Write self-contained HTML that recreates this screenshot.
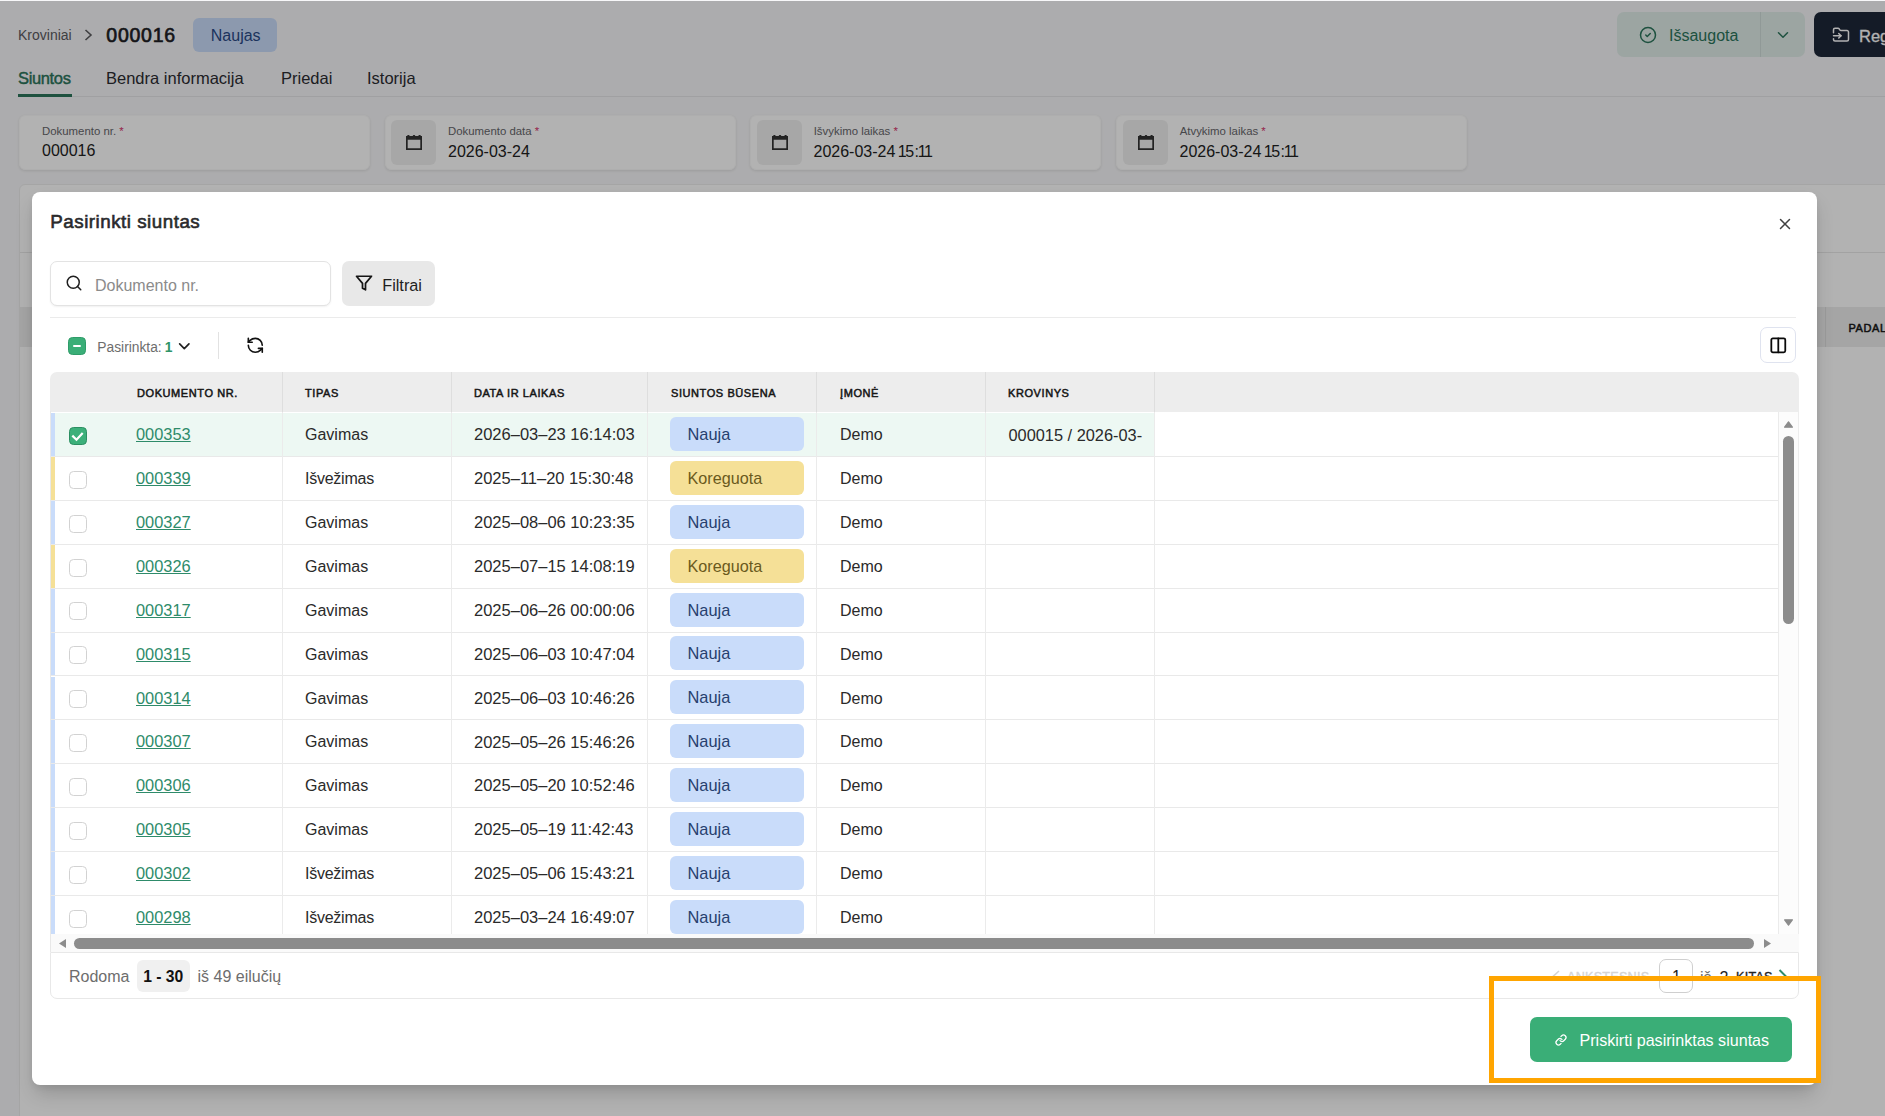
<!DOCTYPE html>
<html lang="lt">
<head>
<meta charset="utf-8">
<title>Kroviniai 000016</title>
<style>
*{box-sizing:border-box;margin:0;padding:0}
html,body{width:1885px;height:1116px;overflow:hidden}
body{font-family:"Liberation Sans",sans-serif;background:#f7f7f9;color:#222;position:relative}
.abs{position:absolute}
.t{position:absolute;white-space:nowrap;line-height:1}
svg{display:block;position:absolute;overflow:visible}

/* ---------- background page ---------- */
#page{position:absolute;left:0;top:0;width:1885px;height:1116px;overflow:hidden}
.crumb{left:18px;top:28px;font-size:14px;color:#5b5b5f}
.docno{left:106.3px;top:25.9px;font-size:19.5px;font-weight:400;color:#1d1d24;letter-spacing:.75px;-webkit-text-stroke:.65px #1d1d24}
.badge-naujas{left:193px;top:18px;width:84px;height:34px;border-radius:6px;background:#c9dcfa}
.badge-naujas span{left:17.8px;top:9.8px;font-size:16px;color:#2a4a86}
.tab{top:70px;font-size:16.5px;color:#2b2b31}
.tab.active{color:#2b755b;font-weight:400;font-size:16.5px;-webkit-text-stroke:.45px #2b755b;letter-spacing:-.35px}
.tabline{left:18px;top:96px;width:1867px;height:1px;background:#e6e6e8}
.tabunder{left:18px;top:94px;width:54px;height:3px;background:#2b755b}
.field{top:115px;height:55px;width:351px;background:#fff;border:1px solid #fafafa;border-radius:6px;box-shadow:0 1px 3px rgba(0,0,0,.10)}
.field .lbl{font-size:11.4px;color:#66666b;top:10px}
.field .lbl i{color:#d6336c;font-style:normal}
.field .val{font-size:16px;color:#222;top:27px}
.field .ico{left:5px;top:4px;width:45px;height:45px;border-radius:6px;background:#f0f0f0}
.card2{left:19px;top:184px;width:1900px;height:960px;background:#fff;border:1px solid #ededed;border-radius:6px}
.card2 .ln{left:0;top:67px;width:1900px;height:1px;background:#e9e9e9}
.card2 .hd{left:0;top:122px;width:1900px;height:40px;background:#ededed}
.btn-saved{left:1617px;top:12px;width:188px;height:45px;border-radius:7px;background:#e0ece9}
.btn-saved .dv{left:143px;top:0;width:1px;height:45px;background:#cfdcd8}
.btn-saved .tx{left:52px;top:15.9px;font-size:16px;color:#2b755b}
.btn-reg{left:1814px;top:12px;width:120px;height:45px;border-radius:7px;background:#1e2738}
.btn-reg .tx{left:45px;top:15.6px;font-size:16.5px;color:#fff;-webkit-text-stroke:.3px #fff}
#overlay{position:absolute;left:0;top:1px;width:1885px;height:1115px;background:rgba(0,0,0,.30)}

/* ---------- modal ---------- */
#modal{position:absolute;left:32px;top:192px;width:1785px;height:893px;background:#fff;border-radius:8px;box-shadow:0 11px 20px -3px rgba(0,0,0,.18),0 3px 7px -1px rgba(0,0,0,.07)}

/* modal content (page coordinates via #mc) */
#mc{position:absolute;left:0;top:0;width:1885px;height:1116px}
.mtitle{left:50.3px;top:212.6px;font-size:18.8px;font-weight:400;letter-spacing:.5px;-webkit-text-stroke:.6px #2a2a2c;color:#2a2a2c}
.search{left:50px;top:261px;width:281px;height:45px;border:1px solid #e3e3e3;border-radius:7px;background:#fff;box-shadow:0 1px 2px rgba(0,0,0,.06)}
.search .ph{left:44px;top:15.8px;font-size:16px;color:#8b8b8b}
.filt{left:342px;top:261px;width:93px;height:45px;border-radius:7px;background:#e8e8e8}
.filt .tx{left:40.2px;top:16.4px;font-size:16.3px;color:#1f1f1f}
.sep{left:50px;top:317px;width:1746px;height:1px;background:#ebebeb}
.cbi{left:68px;top:337px;width:18px;height:18px;border-radius:4.5px;background:#3aae77;border:1px solid #2f9c69}
.cbi i{position:absolute;left:4.2px;top:6.7px;width:7.5px;height:2.6px;background:#fff;border-radius:1px}
.selt{left:97.3px;top:340.6px;font-size:13.8px;color:#6d6d6d}
.selt b{color:#2e9467;font-weight:700;margin-left:3px}
.vdiv{left:218px;top:332px;width:1px;height:27px;background:#e2e2e2}
.colbtn{left:1760px;top:327px;width:36px;height:36px;border:1px solid #dfe3ef;border-radius:7px;background:#fff}
.thead{left:50px;top:372px;width:1749px;height:39.5px;background:#ededed;border-radius:7px 7px 0 0}
.thead .h{top:16px;font-size:11px;font-weight:400;letter-spacing:.58px;color:#161616;-webkit-text-stroke:.5px #161616}
.thead .v{top:0;width:1px;height:39.5px;background:#dedede}
#tb{position:absolute;left:50px;top:412px;width:1728px;height:522px;overflow:hidden;background:#fff}
.row{position:absolute;left:0;width:1728px;height:43.9px;background:#fff}
.row .hl{left:1px;right:0;bottom:0;height:1px;background:#e9e9e9}
.row.sel::before{content:"";position:absolute;left:0;top:0;width:1104px;bottom:0;background:#edf8f3}
.row .bar{left:1px;top:0;bottom:0;width:4px;background:#c9dcfa}
.row.y .bar{background:#f5e097}
.row .cb{left:19px;top:13.8px;width:18px;height:18px;border:1.5px solid #d2d2d2;border-radius:4.5px;background:#fff}
.row .cb.on{border:1px solid #2c8f62;background:#3cb07a}
.row .c{top:14px;font-size:16px;color:#2a2a2a}
.row .c.d{font-size:16.5px;top:13.2px}
.row .lk{top:13.1px;font-size:16.4px;color:#2e8b6a;text-decoration:underline;text-underline-offset:1.3px;text-decoration-thickness:1.2px}
.row .bd{left:620px;top:3.9px;width:134px;height:34px;border-radius:6px;background:#c9dcfa}
.row .bd span{left:17.5px;top:9px;font-size:16.4px;color:#27406e}
.row .bd.y{background:#f5e097}
.row .bd.y span{color:#6a5a1d;font-size:16.2px}
.vl{position:absolute;top:0;width:1px;height:522px;background:#ebebeb}
.vsb{left:1778px;top:412px;width:21px;height:522px;background:#fcfcfc;border-left:1px solid #ebebeb;border-right:1px solid #ededed}
.vsb .th{left:4px;top:24px;width:11px;height:188px;border-radius:5.5px;background:#8c8c8c}
.hsb{left:51px;top:934px;width:1748px;height:18px;background:#fafafa}
.hsb .th{left:23px;top:4px;width:1680px;height:11px;border-radius:5.5px;background:#8c8c8c}
.foot{left:50px;top:952px;width:1749px;height:47px;border:1px solid #e8e8e8;border-radius:0 0 7px 7px;background:#fff}
.foot .g{top:15.8px;font-size:16px;color:#6d6d6d}
.chip{left:86.2px;top:7px;width:53px;height:32px;border-radius:6px;background:#f0f0f0}
.chip span{left:6px;top:9.3px;font-size:15.7px;font-weight:700;color:#111}
.pgclip{position:absolute;left:1540px;top:952px;width:260px;height:24px;overflow:hidden}
.pgclip .p{top:18.6px;font-size:12.6px;font-weight:400;letter-spacing:.25px;-webkit-text-stroke:.35px currentColor}
.pgbox{left:1659px;top:959px;width:34px;height:34px;border:1px solid #cfcfcf;border-radius:7px}
.gbtn{left:1530px;top:1017px;width:262px;height:45px;border-radius:7px;background:#3aae77}
.gbtn .tx{left:49.5px;top:14.5px;font-size:16.1px;color:#fff}
.obox{left:1489px;top:976px;width:332px;height:107px;border:5px solid #ffa500}
</style>
</head>
<body>
<div id="page">
  <div class="t crumb">Kroviniai</div>
  <svg style="left:84px;top:29px" width="9" height="12" viewBox="0 0 9 12"><path d="M1.5 1 L7 6 L1.5 11" fill="none" stroke="#5b5b5f" stroke-width="1.6"/></svg>
  <div class="t docno">000016</div>
  <div class="abs badge-naujas"><span class="t">Naujas</span></div>

  <div class="t tab active" style="left:18px">Siuntos</div>
  <div class="t tab" style="left:106px">Bendra informacija</div>
  <div class="t tab" style="left:281px">Priedai</div>
  <div class="t tab" style="left:367px">Istorija</div>
  <div class="abs tabline"></div>
  <div class="abs tabunder"></div>

  <div class="abs field" style="left:19px"><div class="t lbl" style="left:22px">Dokumento nr. <i>*</i></div><div class="t val" style="left:22px">000016</div></div>
  <div class="abs field" style="left:385px"><div class="abs ico"><svg style="left:15px;top:15px" width="16" height="15" viewBox="0 0 16 15"><path d="M0 .9 H16 V15 H0 Z M1.7 4.8 V13.3 H14.3 V4.8 Z" fill="#333" fill-rule="evenodd"/><rect x="1.2" y="0" width="2.4" height="1.6" rx=".8" fill="#333"/><rect x="6.8" y="0" width="2.4" height="1.6" rx=".8" fill="#333"/><rect x="12.4" y="0" width="2.4" height="1.6" rx=".8" fill="#333"/></svg></div><div class="t lbl" style="left:62px">Dokumento data <i>*</i></div><div class="t val" style="left:62px;top:28px">2026-03-24</div></div>
  <div class="abs field" style="left:750px"><div class="abs ico" style="left:6px"><svg style="left:15px;top:15px" width="16" height="15" viewBox="0 0 16 15"><path d="M0 .9 H16 V15 H0 Z M1.7 4.8 V13.3 H14.3 V4.8 Z" fill="#333" fill-rule="evenodd"/><rect x="1.2" y="0" width="2.4" height="1.6" rx=".8" fill="#333"/><rect x="6.8" y="0" width="2.4" height="1.6" rx=".8" fill="#333"/><rect x="12.4" y="0" width="2.4" height="1.6" rx=".8" fill="#333"/></svg></div><div class="t lbl" style="left:62.7px">Išvykimo laikas <i>*</i></div><div class="t val" style="left:62.5px;top:28px">2026-03-24 <span style="margin-left:-1.95px;letter-spacing:-1.54px">1</span><span style="letter-spacing:.3px">5</span><span style="letter-spacing:-1.1px">:</span><span style="letter-spacing:-2.7px">1</span>1</div></div>
  <div class="abs field" style="left:1116px"><div class="abs ico" style="left:6px"><svg style="left:15px;top:15px" width="16" height="15" viewBox="0 0 16 15"><path d="M0 .9 H16 V15 H0 Z M1.7 4.8 V13.3 H14.3 V4.8 Z" fill="#333" fill-rule="evenodd"/><rect x="1.2" y="0" width="2.4" height="1.6" rx=".8" fill="#333"/><rect x="6.8" y="0" width="2.4" height="1.6" rx=".8" fill="#333"/><rect x="12.4" y="0" width="2.4" height="1.6" rx=".8" fill="#333"/></svg></div><div class="t lbl" style="left:62.7px">Atvykimo laikas <i>*</i></div><div class="t val" style="left:62.5px;top:28px">2026-03-24 <span style="margin-left:-1.95px;letter-spacing:-1.54px">1</span><span style="letter-spacing:.3px">5</span><span style="letter-spacing:-1.1px">:</span><span style="letter-spacing:-2.7px">1</span>1</div></div>

  <div class="abs card2"><div class="abs ln"></div><div class="abs hd"><div class="abs" style="left:1804.5px;top:0;width:1px;height:40px;background:#dedede"></div><div class="t" style="left:1828.5px;top:16px;font-size:11px;font-weight:400;letter-spacing:.58px;color:#161616;-webkit-text-stroke:.5px #161616">PADALINYS</div></div></div>

  <div class="abs btn-saved"><div class="abs dv"></div><svg style="left:22px;top:14px" width="18" height="18" viewBox="0 0 24 24" fill="none" stroke="#2b755b" stroke-width="2" stroke-linecap="round" stroke-linejoin="round"><circle cx="12" cy="12" r="10"/><path d="m9 12 2 2 4-4"/></svg><div class="t tx">Išsaugota</div><svg style="left:157px;top:13.5px" width="18" height="18" viewBox="0 0 24 24" fill="none" stroke="#2b755b" stroke-width="2" stroke-linecap="round" stroke-linejoin="round"><path d="m6 9 6 6 6-6"/></svg></div>
  <div class="abs btn-reg"><svg style="left:18px;top:14px" width="18" height="18" viewBox="0 0 24 24" fill="none" stroke="#fff" stroke-width="2" stroke-linecap="round" stroke-linejoin="round"><path d="M2 9V5a2 2 0 0 1 2-2h3.9a2 2 0 0 1 1.69.9l.81 1.2a2 2 0 0 0 1.67.9H20a2 2 0 0 1 2 2v10a2 2 0 0 1-2 2H4a2 2 0 0 1-2-2v-1"/><path d="M2 13h10"/><path d="m9 16 3-3-3-3"/></svg><div class="t tx">Reg</div></div>
</div>
<div id="overlay"></div>

<div id="modal"></div>

<div id="mc">
  <div class="t mtitle">Pasirinkti siuntas</div>
  <svg style="left:1776px;top:215px" width="18" height="18" viewBox="0 0 24 24" fill="none" stroke="#414141" stroke-width="2" stroke-linecap="round" stroke-linejoin="round"><path d="M18 6 6 18"/><path d="m6 6 12 12"/></svg>

  <div class="abs search">
    <svg style="left:14.1px;top:11.8px" width="18" height="18" viewBox="0 0 24 24" fill="none" stroke="#1f1f1f" stroke-width="2" stroke-linecap="round" stroke-linejoin="round"><circle cx="11" cy="11" r="8"/><path d="m21 21-4.3-4.3"/></svg>
    <div class="t ph">Dokumento nr.</div>
  </div>
  <div class="abs filt">
    <svg style="left:13px;top:13.1px" width="18" height="18" viewBox="0 0 24 24" fill="none" stroke="#141414" stroke-width="2.3" stroke-linecap="round" stroke-linejoin="round"><polygon points="22 3 2 3 10 12.46 10 19 14 21 14 12.46 22 3"/></svg>
    <div class="t tx">Filtrai</div>
  </div>
  <div class="abs sep"></div>

  <div class="abs cbi"><i></i></div>
  <div class="t selt">Pasirinkta:<b>1</b></div>
  <svg style="left:175.3px;top:337px" width="18.6" height="18.6" viewBox="0 0 24 24" fill="none" stroke="#222" stroke-width="2.2" stroke-linecap="round" stroke-linejoin="round"><path d="m6 9 6 6 6-6"/></svg>
  <div class="abs vdiv"></div>
  <svg style="left:245.85px;top:335.9px" width="18.6" height="18.6" viewBox="0 0 24 24" fill="none" stroke="#111" stroke-width="2.1" stroke-linecap="round" stroke-linejoin="round"><path d="M21 12a9 9 0 0 0-9-9 9.75 9.75 0 0 0-6.74 2.74L3 8"/><path d="M3 3v5h5"/><path d="M3 12a9 9 0 0 0 9 9 9.75 9.75 0 0 0 6.74-2.74L21 16"/><path d="M16 16h5v5"/></svg>
  <div class="abs colbtn"><svg style="left:8px;top:7.6px" width="18.6" height="18.6" viewBox="0 0 24 24" fill="none" stroke="#0a0a0a" stroke-width="2.3" stroke-linecap="round" stroke-linejoin="round"><rect width="18" height="18" x="3" y="3" rx="2"/><path d="M12 3v18"/></svg></div>

  <div class="abs thead">
    <div class="t h" style="left:87px">DOKUMENTO NR.</div>
    <div class="t h" style="left:255px">TIPAS</div>
    <div class="t h" style="left:424px">DATA IR LAIKAS</div>
    <div class="t h" style="left:621px">SIUNTOS BŪSENA</div>
    <div class="t h" style="left:790px">ĮMONĖ</div>
    <div class="t h" style="left:958px">KROVINYS</div>
    <div class="abs v" style="left:232px"></div><div class="abs v" style="left:401px"></div><div class="abs v" style="left:597px"></div><div class="abs v" style="left:766px"></div><div class="abs v" style="left:935px"></div><div class="abs v" style="left:1104px"></div>
  </div>

  <div id="tb">
<div class="row sel" style="top:1.1px"><div class="abs bar"></div><div class="abs cb on"><svg style="left:-1px;top:-1px" width="18" height="18" viewBox="0 0 18 18"><path d="M3.3 8.6 L7.5 12.7 L13.7 6.1" fill="none" stroke="#fff" stroke-width="2.2"/></svg></div><a class="t lk" style="left:86px">000353</a><div class="t c" style="left:255px">Gavimas</div><div class="t c d" style="left:424px">2026–03–23 16:14:03</div><div class="abs bd"><span class="t">Nauja</span></div><div class="t c" style="left:790px">Demo</div><div class="t c" style="left:958.5px;font-size:16.35px;top:13.5px">000015 / 2026-03-</div><div class="abs hl"></div></div>
<div class="row y" style="top:45.0px"><div class="abs bar"></div><div class="abs cb"></div><a class="t lk" style="left:86px">000339</a><div class="t c" style="left:255px;letter-spacing:-.25px">Išvežimas</div><div class="t c d" style="left:424px">2025–11–20 15:30:48</div><div class="abs bd y"><span class="t">Koreguota</span></div><div class="t c" style="left:790px">Demo</div><div class="abs hl"></div></div>
<div class="row" style="top:88.9px"><div class="abs bar"></div><div class="abs cb"></div><a class="t lk" style="left:86px">000327</a><div class="t c" style="left:255px">Gavimas</div><div class="t c d" style="left:424px">2025–08–06 10:23:35</div><div class="abs bd"><span class="t">Nauja</span></div><div class="t c" style="left:790px">Demo</div><div class="abs hl"></div></div>
<div class="row y" style="top:132.8px"><div class="abs bar"></div><div class="abs cb"></div><a class="t lk" style="left:86px">000326</a><div class="t c" style="left:255px">Gavimas</div><div class="t c d" style="left:424px">2025–07–15 14:08:19</div><div class="abs bd y"><span class="t">Koreguota</span></div><div class="t c" style="left:790px">Demo</div><div class="abs hl"></div></div>
<div class="row" style="top:176.7px"><div class="abs bar"></div><div class="abs cb"></div><a class="t lk" style="left:86px">000317</a><div class="t c" style="left:255px">Gavimas</div><div class="t c d" style="left:424px">2025–06–26 00:00:06</div><div class="abs bd"><span class="t">Nauja</span></div><div class="t c" style="left:790px">Demo</div><div class="abs hl"></div></div>
<div class="row" style="top:220.6px"><div class="abs bar"></div><div class="abs cb"></div><a class="t lk" style="left:86px">000315</a><div class="t c" style="left:255px">Gavimas</div><div class="t c d" style="left:424px">2025–06–03 10:47:04</div><div class="abs bd"><span class="t">Nauja</span></div><div class="t c" style="left:790px">Demo</div><div class="abs hl"></div></div>
<div class="row" style="top:264.5px"><div class="abs bar"></div><div class="abs cb"></div><a class="t lk" style="left:86px">000314</a><div class="t c" style="left:255px">Gavimas</div><div class="t c d" style="left:424px">2025–06–03 10:46:26</div><div class="abs bd"><span class="t">Nauja</span></div><div class="t c" style="left:790px">Demo</div><div class="abs hl"></div></div>
<div class="row" style="top:308.4px"><div class="abs bar"></div><div class="abs cb"></div><a class="t lk" style="left:86px">000307</a><div class="t c" style="left:255px">Gavimas</div><div class="t c d" style="left:424px">2025–05–26 15:46:26</div><div class="abs bd"><span class="t">Nauja</span></div><div class="t c" style="left:790px">Demo</div><div class="abs hl"></div></div>
<div class="row" style="top:352.3px"><div class="abs bar"></div><div class="abs cb"></div><a class="t lk" style="left:86px">000306</a><div class="t c" style="left:255px">Gavimas</div><div class="t c d" style="left:424px">2025–05–20 10:52:46</div><div class="abs bd"><span class="t">Nauja</span></div><div class="t c" style="left:790px">Demo</div><div class="abs hl"></div></div>
<div class="row" style="top:396.2px"><div class="abs bar"></div><div class="abs cb"></div><a class="t lk" style="left:86px">000305</a><div class="t c" style="left:255px">Gavimas</div><div class="t c d" style="left:424px">2025–05–19 11:42:43</div><div class="abs bd"><span class="t">Nauja</span></div><div class="t c" style="left:790px">Demo</div><div class="abs hl"></div></div>
<div class="row" style="top:440.1px"><div class="abs bar"></div><div class="abs cb"></div><a class="t lk" style="left:86px">000302</a><div class="t c" style="left:255px;letter-spacing:-.25px">Išvežimas</div><div class="t c d" style="left:424px">2025–05–06 15:43:21</div><div class="abs bd"><span class="t">Nauja</span></div><div class="t c" style="left:790px">Demo</div><div class="abs hl"></div></div>
<div class="row" style="top:484.0px"><div class="abs bar"></div><div class="abs cb"></div><a class="t lk" style="left:86px">000298</a><div class="t c" style="left:255px;letter-spacing:-.25px">Išvežimas</div><div class="t c d" style="left:424px">2025–03–24 16:49:07</div><div class="abs bd"><span class="t">Nauja</span></div><div class="t c" style="left:790px">Demo</div><div class="abs hl"></div></div>
    <div class="vl" style="left:232px"></div><div class="vl" style="left:401px"></div><div class="vl" style="left:597px"></div><div class="vl" style="left:766px"></div><div class="vl" style="left:935px"></div><div class="vl" style="left:1104px"></div>
  </div>

  <div class="abs" style="left:50px;top:411px;width:1px;height:541px;background:#e8e8e8"></div>
  <div class="abs vsb">
    <svg style="left:4.8px;top:9px" width="9" height="7" viewBox="0 0 9 7"><path d="M.6 6.2 L4.5 .8 L8.4 6.2 Z" fill="#8c8c8c" stroke="#8c8c8c" stroke-width="1.2" stroke-linejoin="round"/></svg>
    <div class="abs th"></div>
    <svg style="left:5px;top:506.5px" width="9" height="7" viewBox="0 0 9 7"><path d="M.6 .8 L4.5 6.2 L8.4 .8 Z" fill="#8c8c8c" stroke="#8c8c8c" stroke-width="1.2" stroke-linejoin="round"/></svg>
  </div>
  <div class="abs hsb">
    <svg style="left:8px;top:5px" width="7" height="9" viewBox="0 0 7 9"><path d="M7 0 L0 4.5 L7 9 Z" fill="#8c8c8c"/></svg>
    <div class="abs th"></div>
    <svg style="left:1713px;top:5px" width="7" height="9" viewBox="0 0 7 9"><path d="M0 0 L7 4.5 L0 9 Z" fill="#8c8c8c"/></svg>
  </div>

  <div class="abs foot">
    <div class="t g" style="left:18px">Rodoma</div>
    <div class="abs chip"><span class="t">1 - 30</span></div>
    <div class="t g" style="left:146.5px">iš 49 eilučių</div>
  </div>
  <div class="pgclip">
    <svg style="left:12px;top:18px" width="8" height="12" viewBox="0 0 8 12"><path d="M7 1 L1.5 6 L7 11" fill="none" stroke="#d4d4d4" stroke-width="1.6"/></svg>
    <div class="t p" style="left:27px;color:#d4d4d4">ANKSTESNIS</div>
    <div class="t" style="left:132px;top:17.4px;font-size:16px;color:#222">1</div>
    <div class="t" style="left:160px;top:17.6px;font-size:16px;color:#6d6d6d">iš <span style="color:#222;margin-left:3.5px">2</span></div>
    <div class="t p" style="left:196px;color:#222">KITAS</div>
    <svg style="left:238px;top:17px" width="9" height="14" viewBox="0 0 9 14"><path d="M1.5 1 L7.5 7 L1.5 13" fill="none" stroke="#2e8b6a" stroke-width="2"/></svg>
  </div>
  <div class="abs pgbox"></div>

  <div class="abs gbtn">
    <svg style="left:24.6px;top:16.5px" width="12" height="12" viewBox="0 0 24 24" fill="none" stroke="#fff" stroke-width="2.5" stroke-linecap="round" stroke-linejoin="round"><path d="M10 13a5 5 0 0 0 7.54.54l3-3a5 5 0 0 0-7.07-7.07l-1.72 1.71"/><path d="M14 11a5 5 0 0 0-7.54-.54l-3 3a5 5 0 0 0 7.07 7.07l1.71-1.71"/></svg>
    <div class="t tx">Priskirti pasirinktas siuntas</div>
  </div>
  <div class="abs obox"></div>
</div>

</body>
</html>
